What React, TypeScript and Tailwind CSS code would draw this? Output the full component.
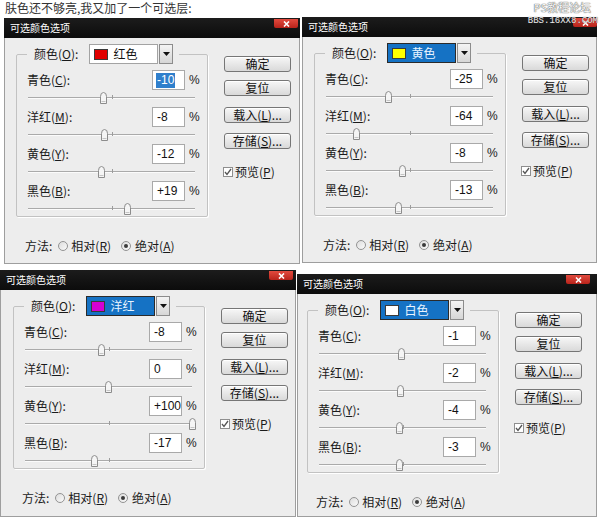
import React from "react";

type DlgProps = {
  colorName: string;
  swatch: string;
  focused: boolean;
  values: number[];
  selectFirst?: boolean;
  outer: string;
  pad: string;
  closeClass: string;
};

const CJK = "font-['Noto_Sans_CJK_SC','Noto_Sans',sans-serif]";
const NUM = "font-['Liberation_Sans',Arial,sans-serif]";

function U({ c }: { c: string }) {
  return <span className="underline underline-offset-[1px]">{c}</span>;
}

function Slider({ value }: { value: number }) {
  const left = 83.5 + (value / 100) * 83.5 - 4.5;
  return (
    <div className="relative ml-[1px] h-[15px] w-[167px]">
      <div className="absolute left-0 right-0 top-[7px] h-[1px] bg-[#aaaaaa]" />
      <div className="absolute left-0 right-0 top-[8px] h-[1px] bg-[#fbfbfb]" />
      <div className="absolute left-[84px] top-[5px] h-[4px] w-[1px] bg-[#9c9c9c]" />
      <svg
        className="absolute top-[2px]"
        style={{ left }}
        width="9"
        height="12"
        viewBox="0 0 9 12"
      >
        <path
          d="M1.5 11.5 V4.5 Q1.5 0.5 4.5 0.5 Q7.5 0.5 7.5 4.5 V11.5 Z"
          fill="#f5f5f5"
          stroke="#8c8c8c"
        />
        <path d="M2.5 9.5 H6.5" stroke="#c4c4c4" />
      </svg>
    </div>
  );
}

function Row({
  label,
  k,
  value,
  selected,
}: {
  label: string;
  k: string;
  value: number;
  selected?: boolean;
}) {
  const text = value > 0 ? `+${value}` : `${value}`;
  return (
    <div className="flex h-[35px] flex-col">
      <div className="flex h-[20px] items-center">
        <span className="w-[125px] text-[12px] leading-[20px] text-[#1a1a1a]">
          {label}(<U c={k} />):
        </span>
        <div
          className={`flex h-[20px] w-[33px] items-center border border-[#a9a9a9] bg-white pl-[3px] text-[12px] text-[#111] ${NUM}`}
        >
          {selected ? (
            <span className="bg-[#2f7fcc] px-[1px] leading-[15px] text-white">{text}</span>
          ) : (
            <span className="px-[1px]">{text}</span>
          )}
        </div>
        <span className={`ml-[4px] text-[12px] text-[#222] ${NUM}`}>%</span>
      </div>
      <Slider value={value} />
    </div>
  );
}

function Btn({ children, cls }: { children: React.ReactNode; cls: string }) {
  return (
    <div
      className={`flex h-[16px] w-[67px] items-center justify-center rounded-[3px] border border-[#767676] bg-gradient-to-b from-[#f7f7f7] to-[#d9d9d9] text-[12px] leading-none text-[#111] shadow-[inset_0_1px_0_#ffffff] ${cls}`}
    >
      {children}
    </div>
  );
}

function Radio({ checked, cls }: { checked?: boolean; cls: string }) {
  return (
    <span
      className={`flex h-[10px] w-[10px] items-center justify-center rounded-full border border-[#939393] bg-gradient-to-br from-[#dcdcdc] to-[#fbfbfb] ${cls}`}
    >
      {checked ? <span className="h-[4px] w-[4px] rounded-full bg-[#3a3a3a]" /> : null}
    </span>
  );
}

function ColorSelect({
  swatch,
  name,
  focused,
}: {
  swatch: string;
  name: string;
  focused: boolean;
}) {
  return (
    <div className="ml-[11px] flex h-[20px] w-[84px]">
      <div
        className={
          focused
            ? "flex h-full w-[69px] items-center border border-[#2a2a2a] bg-[#1572c4] text-[#e8f4ff]"
            : "flex h-full w-[69px] items-center border border-[#a3a3a3] bg-white text-[#111]"
        }
      >
        <span className={`ml-[4px] h-[11px] w-[14px] border border-[#3a3a3a] ${swatch}`} />
        <span className="ml-[5px] text-[12px] leading-none">{name}</span>
      </div>
      <div className="ml-[1px] flex h-full w-[14px] items-center justify-center border border-[#8c8c8c] bg-gradient-to-b from-[#f4f4f4] to-[#d6d6d6]">
        <svg width="7" height="4" viewBox="0 0 7 4">
          <path d="M0 0 H7 L3.5 4 Z" fill="#111" />
        </svg>
      </div>
    </div>
  );
}

function Dialog(p: DlgProps) {
  const names = ["青色", "洋红", "黄色", "黑色"];
  const keys = ["C", "M", "Y", "B"];
  return (
    <div className={`flex flex-col overflow-hidden ${CJK} ${p.outer}`}>
      <div className="flex h-[20px] shrink-0 items-start justify-between bg-gradient-to-b from-[#1c1c1c] to-[#0c0c0c]">
        <span className="pl-[6px] text-[10px] leading-[20px] text-white">可选颜色选项</span>
        <div
          className={`mt-[1px] flex h-[9px] w-[24px] items-center justify-center rounded-b-[2px] bg-gradient-to-b from-[#e24a3e] to-[#b8221a] ${p.closeClass}`}
        >
          <svg width="7" height="6" viewBox="0 0 7 6">
            <path d="M1 0.5 L6 5.5 M6 0.5 L1 5.5" stroke="#ffffff" strokeWidth="1.6" />
          </svg>
        </div>
      </div>
      <div className="flex flex-1 flex-col border-x border-b border-[#9e9e9e] bg-[#ededed]">
        <div className={`flex flex-col ${p.pad}`}>
          <div className="flex">
            <fieldset className="mt-[6px] w-[192px] rounded-[2px] border border-[#c2c2c2] pl-[10px] shadow-[1px_1px_0_#ffffff]">
              <legend className="pl-[7px] pr-[6px]">
                <div className="flex items-center">
                  <span className="text-[12px] leading-[20px] text-[#1a1a1a]">
                    颜色(<U c="O" />):
                  </span>
                  <ColorSelect swatch={p.swatch} name={p.colorName} focused={p.focused} />
                </div>
              </legend>
              <div className="flex flex-col gap-[2px] pt-[6px]">
                {p.values.map((v, i) => (
                  <Row
                    key={i}
                    label={names[i]}
                    k={keys[i]}
                    value={v}
                    selected={p.selectFirst && i === 0}
                  />
                ))}
              </div>
            </fieldset>
            <div className="ml-[16px] mt-[18px] flex w-[67px] flex-col">
              <Btn cls="">确定</Btn>
              <Btn cls="mt-[8px]">复位</Btn>
              <Btn cls="mt-[11px]">
                载入(<U c="L" />)...
              </Btn>
              <Btn cls="mt-[10px]">
                存储(<U c="S" />)...
              </Btn>
              <div className="-ml-[1px] mt-[14px] flex items-center">
                <span className="flex h-[10px] w-[10px] items-center justify-center border border-[#8e8e8e] bg-white">
                  <svg width="8" height="8" viewBox="0 0 8 8">
                    <path d="M1 4 L3 6.5 L7 1" fill="none" stroke="#555" strokeWidth="1.3" />
                  </svg>
                </span>
                <span className="ml-[2px] text-[12px] text-[#1a1a1a]">
                  预览(<U c="P" />)
                </span>
              </div>
            </div>
          </div>
          <div className="mt-[19px] flex h-[20px] items-center pl-[9px] text-[12px] text-[#1a1a1a]">
            <span>方法:</span>
            <Radio cls="ml-[6px]" />
            <span className="ml-[3px]">
              相对(<U c="R" />)
            </span>
            <Radio checked cls="ml-[10px]" />
            <span className="ml-[4px]">
              绝对(<U c="A" />)
            </span>
          </div>
        </div>
      </div>
    </div>
  );
}

export default function App() {
  return (
    <div className={`relative flex h-[519px] w-[600px] flex-col overflow-hidden bg-white ${CJK}`}>
      <div className="h-[17px] shrink-0 pl-[5px] text-[12px] leading-[15px] text-[#333]">
        肤色还不够亮,我又加了一个可选层:
      </div>
      <div className="flex h-[247px] shrink-0 items-start">
        <Dialog
          outer="ml-[4px] mt-[1px] h-[246px] w-[296px]"
          pad="pl-[11px]"
          closeClass="mr-[2px]"
          colorName="红色"
          swatch="bg-[#e00000]"
          focused={false}
          values={[-10, -8, -12, 19]}
          selectFirst
        />
        <Dialog
          outer="ml-[2px] h-[246px] w-[295px]"
          pad="pl-[11px]"
          closeClass="mr-[0px]"
          colorName="黄色"
          swatch="bg-[#ffff00]"
          focused
          values={[-25, -64, -8, -13]}
        />
      </div>
      <div className="mt-[6px] flex shrink-0 items-start">
        <Dialog
          outer="h-[247px] w-[296px]"
          pad="pl-[12px]"
          closeClass="mr-[3px]"
          colorName="洋红"
          swatch="bg-[#d400d4]"
          focused
          values={[-8, 0, 100, -17]}
        />
        <Dialog
          outer="ml-[1px] mt-[4px] h-[243px] w-[300px]"
          pad="pl-[9px]"
          closeClass="mr-[7px]"
          colorName="白色"
          swatch="bg-white"
          focused
          values={[-1, -2, -4, -3]}
        />
      </div>
      <div className="absolute right-[9px] top-[1px] text-[11px] leading-[13px] text-[#f4f4f4] [text-shadow:0_0_1px_#555,0_0_1px_#555]">
        PS教程论坛
      </div>
      <div className="absolute right-[2px] top-[16px] font-['Liberation_Mono',monospace] text-[9px] leading-[10px] text-[#e8e8e8] [text-shadow:0_0_1px_#333]">
        BBS.16XX8.COM
      </div>
    </div>
  );
}
